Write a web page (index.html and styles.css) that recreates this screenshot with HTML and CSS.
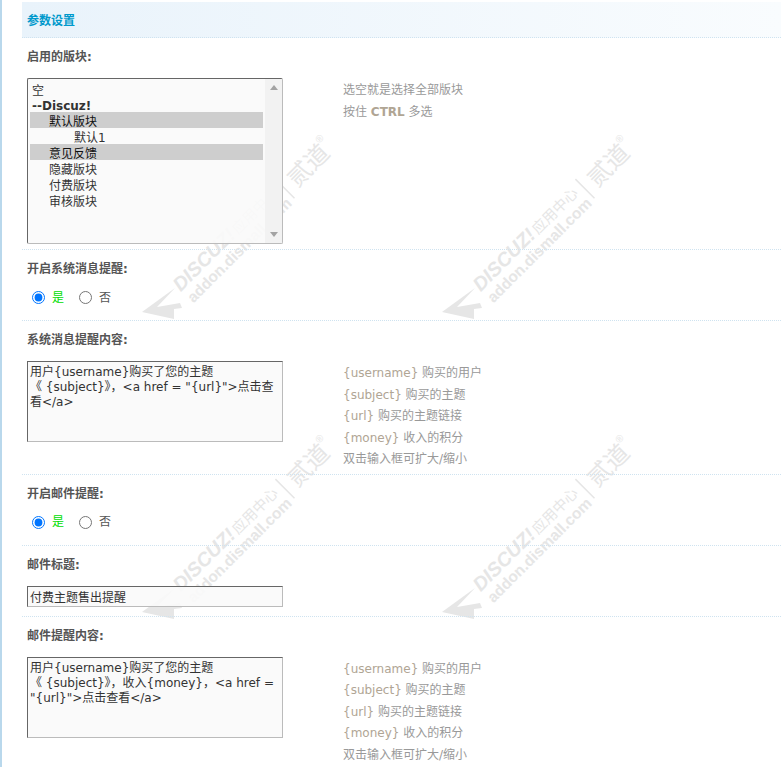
FILE: index.html
```html
<!DOCTYPE html>
<html lang="zh-CN">
<head>
    <meta charset="UTF-8">
    <title>参数设置</title>
    <link rel="stylesheet" href="styles.css">
</head>
<body>
    <div class="page">
        <!-- watermark tiles, behind the form -->
        <svg class="wm wm-a" viewBox="0 0 200 200" width="200" height="200"><use href="#wm"></use></svg>
        <svg class="wm wm-b" viewBox="0 0 200 200" width="200" height="200"><use href="#wm"></use></svg>
        <svg class="wm wm-c" viewBox="0 0 200 200" width="200" height="200"><use href="#wm"></use></svg>
        <svg class="wm wm-d" viewBox="0 0 200 200" width="200" height="200">
            <defs>
                <g id="wm">
                    <polygon points="2,182 35,158 17,177 40,173 42,178 34,179 34,189"></polygon>
                    <g transform="rotate(-45 35 158)">
                        <text class="wm-big" x="36" y="165">DISCUZ!</text>
                        <text class="wm-cn" x="117" y="165">应用中心</text>
                        <text class="wm-url" x="37" y="182">addon.dismall.com</text>
                        <line x1="183" y1="152" x2="183" y2="179"></line>
                        <text class="wm-name" x="192" y="174">贰道</text>
                        <text class="wm-reg" x="239" y="158">®</text>
                    </g>
                </g>
            </defs>
            <use href="#wm"></use>
        </svg>

        <div class="main">
            <div class="panel-title">参数设置</div>

            <div class="row">
                <div class="row-label">启用的版块:</div>
                <div class="row-body">
                    <div class="control list-wrap">
                        <select class="forum-list" multiple>
                            <option class="top">空</option>
                            <optgroup label="--Discuz!">
                                <option selected>默认版块</option>
                                <option class="sub">默认1</option>
                                <option selected>意见反馈</option>
                                <option>隐藏版块</option>
                                <option>付费版块</option>
                                <option>审核版块</option>
                            </optgroup>
                        </select>
                        <div class="list-bar">
                            <span class="arrow-up"></span>
                            <span class="arrow-down"></span>
                        </div>
                    </div>
                    <div class="tips">
                        <div>选空就是选择全部版块</div>
                        <div>按住 <b>CTRL</b> 多选</div>
                    </div>
                </div>
            </div>

            <div class="row">
                <div class="row-label">开启系统消息提醒:</div>
                <div class="row-body">
                    <div class="control radios">
                        <label class="on"><input type="radio" name="sys" checked>是</label>
                        <label><input type="radio" name="sys">否</label>
                    </div>
                </div>
            </div>

            <div class="row">
                <div class="row-label">系统消息提醒内容:</div>
                <div class="row-body">
                    <div class="control">
                        <textarea class="text-box">用户{username}购买了您的主题《&nbsp;{subject}》，&lt;a href = "{url}"&gt;点击查看&lt;/a&gt;</textarea>
                    </div>
                    <div class="tips">
                        <div><span class="var">{username}</span> 购买的用户</div>
                        <div><span class="var">{subject}</span> 购买的主题</div>
                        <div><span class="var">{url}</span> 购买的主题链接</div>
                        <div><span class="var">{money}</span> 收入的积分</div>
                        <div>双击输入框可扩大/缩小</div>
                    </div>
                </div>
            </div>

            <div class="row">
                <div class="row-label">开启邮件提醒:</div>
                <div class="row-body">
                    <div class="control radios">
                        <label class="on"><input type="radio" name="mail" checked>是</label>
                        <label><input type="radio" name="mail">否</label>
                    </div>
                </div>
            </div>

            <div class="row">
                <div class="row-label">邮件标题:</div>
                <div class="row-body">
                    <div class="control">
                        <input class="text-line" type="text" value="付费主题售出提醒">
                    </div>
                </div>
            </div>

            <div class="row">
                <div class="row-label">邮件提醒内容:</div>
                <div class="row-body">
                    <div class="control">
                        <textarea class="text-box">用户{username}购买了您的主题《&nbsp;{subject}》，收入{money}，&lt;a href = "{url}"&gt;点击查看&lt;/a&gt;</textarea>
                    </div>
                    <div class="tips">
                        <div><span class="var">{username}</span> 购买的用户</div>
                        <div><span class="var">{subject}</span> 购买的主题</div>
                        <div><span class="var">{url}</span> 购买的主题链接</div>
                        <div><span class="var">{money}</span> 收入的积分</div>
                        <div>双击输入框可扩大/缩小</div>
                    </div>
                </div>
            </div>
        </div>
    </div>
</body>
</html>
```

FILE: styles.css
```css
html, body {
    margin: 0;
    padding: 0;
    height: 100%;
    overflow: hidden;
}

body {
    background: #fff;
    color: #333;
    font: 12px/16px "DejaVu Sans", "Noto Sans CJK SC", sans-serif;
}

.page {
    position: relative;
    height: 767px;
    overflow: hidden;
    border-left: 2px solid #b9d8ec;
}

.main {
    position: relative;
    margin-left: 20px;
    padding-top: 2px;
}

.panel-title {
    height: 35px;
    line-height: 38px;
    padding-left: 5px;
    background: linear-gradient(to right, #e9f3fb, #f9fcfe);
    border-bottom: 1px dotted #cfe3f0;
    color: #09c;
    font-weight: bold;
}

.row {
    border-bottom: 1px dotted #cfe3f0;
    padding: 11px 0 5px 5px;
}

.row-label {
    height: 16px;
    margin-bottom: 13px;
    color: #555;
    font-weight: bold;
}

.row-body {
    display: flex;
}

.control {
    width: 256px;
    min-height: 25px;
    flex: none;
}

.tips {
    margin: 2px 0 -2px 60px;
    color: #999;
    line-height: 21.5px;
}

.tips b, .var {
    color: #b0a594;
}

.forum-list,
.text-box,
.text-line {
    display: block;
    box-sizing: border-box;
    width: 256px;
    margin: 0;
    font: 12px/15px "DejaVu Sans", "Noto Sans CJK SC", sans-serif;
    color: #333;
    background: rgba(249, 249, 249, 0.9);
    border: 1px solid;
    border-color: #666 #bbb #bbb #666;
    outline: none;
}

.list-wrap {
    position: relative;
}

.forum-list {
    height: 166px;
    padding: 2px 19px 2px 2px;
    line-height: 16px;
}

/* the listbox scrollbar, always shown in the original */
.list-bar {
    position: absolute;
    top: 1px;
    right: 1px;
    bottom: 1px;
    width: 17px;
    background: rgba(241, 241, 241, 0.9);
    display: flex;
    flex-direction: column;
    justify-content: space-between;
    align-items: center;
    padding: 6px 0;
    box-sizing: border-box;
}

.arrow-up {
    border: 4px solid transparent;
    border-top: 0;
    border-bottom: 5px solid #a3a3a3;
}

.arrow-down {
    border: 4px solid transparent;
    border-bottom: 0;
    border-top: 5px solid #a3a3a3;
}

.forum-list option {
    height: 16px;
    min-height: 16px;
    padding: 0 2px 0 19px;
    line-height: 16px;
    font-weight: normal;
}

.forum-list optgroup option {
    position: relative;
    top: -2px;
}

.forum-list option.top {
    padding: 0 2px 2px;
}

.forum-list option.sub {
    padding-left: 44px;
}

.forum-list optgroup {
    font-weight: bold;
    color: #333;
}

.text-box {
    height: 81px;
    padding: 3px 2px 2px;
    resize: none;
    overflow: hidden;
}

.text-line {
    height: 21px;
    padding: 2px;
}

.radios {
    display: flex;
    gap: 10px;
}

.radios label {
    display: flex;
    align-items: center;
    height: 15px;
    color: #555;
}

.radios .on {
    color: #0d0;
}

.radios input {
    width: 13px;
    height: 13px;
    margin: 0 7px 0 5px;
}

/* watermark */
.wm {
    position: absolute;
    overflow: visible;
    fill: #e6e6e6;
    stroke: none;
}

.wm line {
    stroke: #e6e6e6;
    stroke-width: 1.5;
}

.wm-a { left: 138px; top: 130px; }
.wm-b { left: 438px; top: 130px; }
.wm-c { left: 138px; top: 430px; }
.wm-d { left: 438px; top: 430px; }

.wm-big {
    font: italic bold 19.5px "Liberation Sans", sans-serif;
}

.wm-cn {
    font: 14.5px "Noto Sans CJK SC", sans-serif;
}

.wm-url {
    font: bold 15.5px "Liberation Sans", sans-serif;
}

.wm-name {
    font: 24px "Noto Sans CJK SC", sans-serif;
}

.wm-reg {
    font: 10px "Liberation Sans", sans-serif;
}
```
